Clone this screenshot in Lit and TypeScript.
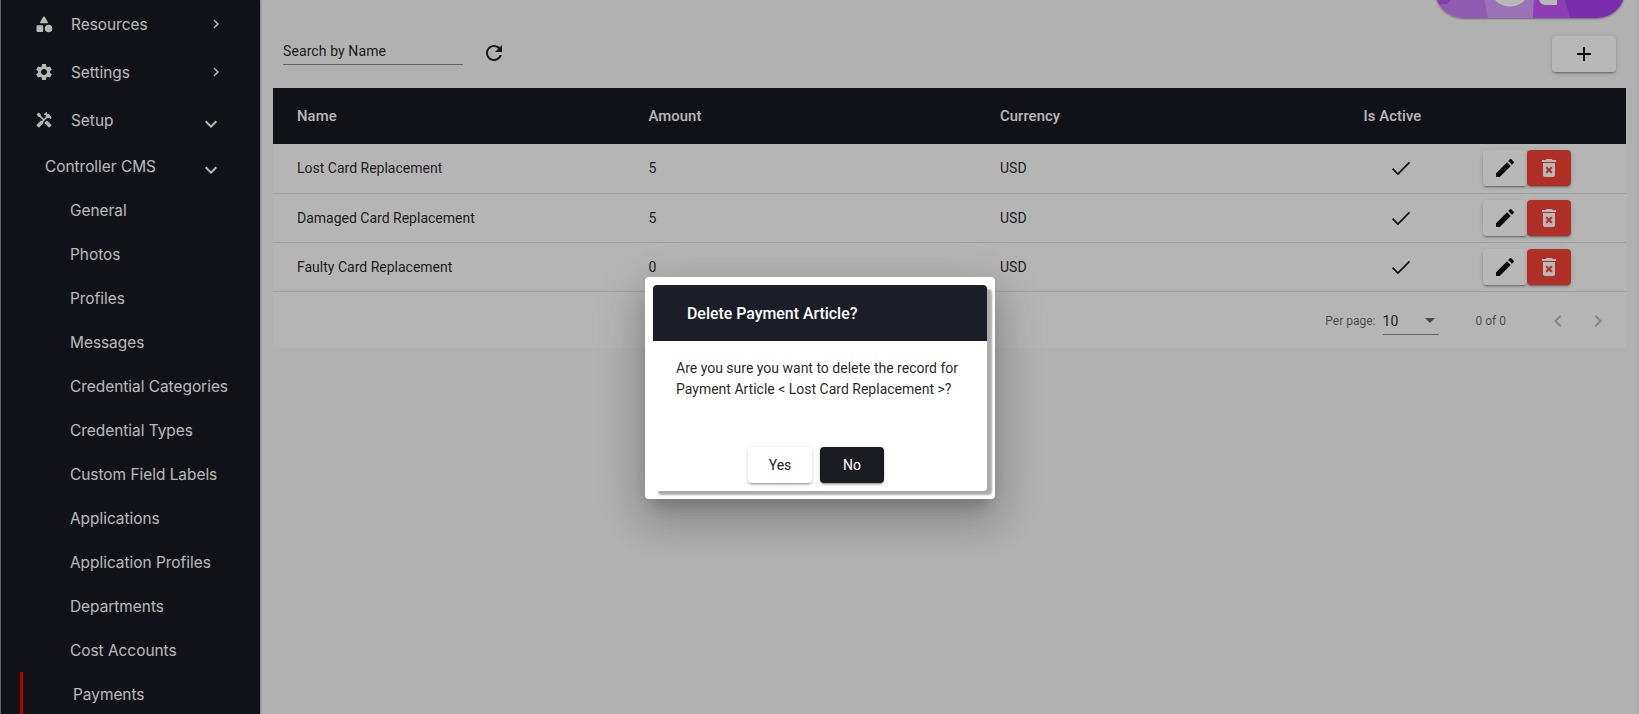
import { LitElement, html, css, svg } from "lit";
import { customElement } from "lit/decorators.js";

const FONT = css`Roboto, "Liberation Sans", sans-serif`;

const subItems = ["General","Photos","Profiles","Messages","Credential Categories","Credential Types","Custom Field Labels","Applications","Application Profiles","Departments","Cost Accounts"];
const rows = [
  ["Lost Card Replacement","5","USD"],
  ["Damaged Card Replacement","5","USD"],
  ["Faulty Card Replacement","0","USD"],
];

const icon = (d: string, size = 24) => html`<svg width=${size} height=${size} viewBox="0 0 24 24" fill="currentColor"><path d=${d}></path></svg>`;

const P = {
  shapes: "M11.15 3.4 7.43 9.48c-.41.66.07 1.52.85 1.52h7.43c.78 0 1.26-.86.85-1.52L12.85 3.4c-.39-.64-1.31-.64-1.7 0zM17.5 13a4.5 4.5 0 1 0 0 9 4.5 4.5 0 0 0 0-9zM4 21.5h6c.55 0 1-.45 1-1v-6c0-.55-.45-1-1-1H4c-.55 0-1 .45-1 1v6c0 .55.45 1 1 1z",
  gear: "M19.14 12.94c.04-.3.06-.61.06-.94 0-.32-.02-.64-.07-.94l2.03-1.58c.18-.14.23-.41.12-.61l-1.92-3.32c-.12-.22-.37-.29-.59-.22l-2.39.96c-.5-.38-1.03-.7-1.62-.94l-.36-2.54c-.04-.24-.24-.41-.48-.41h-3.84c-.24 0-.43.17-.47.41l-.36 2.54c-.59.24-1.13.57-1.62.94l-2.39-.96c-.22-.08-.47 0-.59.22L2.74 8.87c-.12.21-.08.47.12.61l2.03 1.58c-.05.3-.09.63-.09.94s.02.64.07.94l-2.03 1.58c-.18.14-.23.41-.12.61l1.92 3.32c.12.22.37.29.59.22l2.39-.96c.5.38 1.03.7 1.62.94l.36 2.54c.05.24.24.41.48.41h3.84c.24 0 .44-.17.47-.41l.36-2.54c.59-.24 1.13-.56 1.62-.94l2.39.96c.22.08.47 0 .59-.22l1.92-3.32c.12-.22.07-.47-.12-.61l-2.01-1.58zM12 15.6c-1.98 0-3.6-1.62-3.6-3.6s1.62-3.6 3.6-3.6 3.6 1.62 3.6 3.6-1.62 3.6-3.6 3.6z",
  tools: "m21.67 18.17-5.3-5.3h-.99l-2.54 2.54v.99l5.3 5.3c.39.39 1.02.39 1.41 0l2.12-2.12c.39-.38.39-1.02 0-1.41zM17.34 10.19l1.41-1.41 2.12 2.12c1.17-1.17 1.17-3.07 0-4.24l-3.54-3.54-1.41 1.41V1.71l-.7-.71-3.54 3.54.71.71h2.83l-1.41 1.41 1.06 1.06-2.89 2.89-4.13-4.13V5.06L4.83 2.04 2 4.87 5.03 7.9h1.41l4.13 4.13-.85.85H7.6l-5.3 5.3c-.39.39-.39 1.02 0 1.41l2.12 2.12c.39.39 1.02.39 1.41 0l5.3-5.3v-2.12l5.15-5.15 1.06 1.05z",
  chevR: "M10 6 8.59 7.41 13.17 12l-4.58 4.59L10 18l6-6z",
  chevD: "M16.59 8.59 12 13.17 7.41 8.59 6 10l6 6 6-6z",
  refresh: "M17.65 6.35C16.2 4.9 14.21 4 12 4c-4.42 0-7.99 3.58-7.99 8s3.57 8 7.99 8c3.73 0 6.84-2.55 7.73-6h-2.08c-.82 2.33-3.04 4-5.65 4-3.31 0-6-2.69-6-6s2.69-6 6-6c1.66 0 3.14.69 4.22 1.78L13 11h7V4l-2.35 2.35z",
  plus: "M19 13h-6v6h-2v-6H5v-2h6V5h2v6h6v2z",
  pencil: "M3 17.25V21h3.75L17.81 9.94l-3.75-3.75L3 17.25zM20.71 7.04c.39-.39.39-1.02 0-1.41l-2.34-2.34a.996.996 0 0 0-1.41 0l-1.83 1.83 3.75 3.75 1.83-1.83z",
  trash: "M6 19c0 1.1.9 2 2 2h8c1.1 0 2-.9 2-2V7H6v12zm2.46-7.12l1.41-1.41L12 12.59l2.12-2.12 1.41 1.41L13.41 14l2.12 2.12-1.41 1.41L12 15.41l-2.12 2.12-1.41-1.41L10.59 14l-2.13-2.12zM15.5 4l-1-1h-5l-1 1H5v2h14V4z",
  left: "M15.41 7.41 14 6l-6 6 6 6 1.41-1.41L10.83 12z",
  right: "M10 6 8.59 7.41 13.17 12l-4.58 4.59L10 18l6-6z",
};

const checkIcon = html`<svg width="24" height="24" viewBox="0 0 24 24" fill="none" stroke="currentColor" stroke-width="1.7"><path d="M3.6 12.7l5.3 5.3L20.5 6.4"></path></svg>`;

@customElement("app-root")
export class AppRoot extends LitElement {
  static styles = css`
    :host { display: block; height: 714px; overflow: hidden; position: relative; font-family: ${FONT}; background: #fff; }
    .page { display: flex; height: 714px; overflow: hidden; }
    .side { width: 260px; flex: none; background: #181a22; border-left: 1px solid #888; box-sizing: border-box; color: #fff; height: 714px; overflow: hidden; font-family: Inter, "Liberation Sans", sans-serif; box-shadow: 1px 0 2px rgba(0,0,0,.25); position: relative; z-index: 1; }
    .top { display: flex; align-items: center; height: 48px; font-size: 15.4px; }
    .top .ic { width: 20px; height: 20px; margin-left: 33px; display: flex; align-items: center; justify-content: center; }
    .top .lb { margin-left: 17px; flex: 1; }
    .top .ch { display: flex; margin-right: 35px; }
    .top .ch.down { margin-right: 37px; margin-top: 7px; }
    .cms { display: flex; align-items: center; height: 44px; font-size: 15.4px; padding-left: 44px; }
    .cms .lb { flex: 1; white-space: nowrap; }
    .cms .ch { display: flex; margin-right: 37px; margin-top: 7px; }
    .sub { display: flex; align-items: center; height: 44px; padding-left: 69px; font-size: 15.4px; white-space: nowrap; }
    .sub.active { position: relative; padding-left: 72px; }
    .sub.active::before { content: ""; position: absolute; left: 19px; top: 0; width: 3px; height: 100%; background: #f00; }
    .main { flex: 1; min-width: 0; background: #f5f5f5; position: relative; padding: 0 11px 0 13px; border-right: 2px solid #eee; }
    .logo { position: absolute; right: 12px; top: -22.5px; width: 190px; height: 40px; border-radius: 0 0 28px 28px; overflow: hidden; box-shadow: 0 1px 2px rgba(0,0,0,.4); }
    .logo svg { display: block; }
    .tools { display: flex; align-items: flex-start; height: 88px; box-sizing: border-box; padding-top: 36px; }
    .search { width: 180px; margin-left: 10px; height: 29px; box-sizing: border-box; border-bottom: 1px solid #8a8a8a; font-size: 14px; color: rgba(0,0,0,.87); padding-top: 7px; letter-spacing: .1px; }
    .refresh { margin-left: 19px; margin-top: 5px; display: flex; color: #222; }
    .spacer { flex: 1; }
    .add { width: 64px; height: 36px; background: #fff; border-radius: 4px; margin-right: 10px; display: flex; align-items: center; justify-content: center; color: #111; box-shadow: 0 3px 1px -2px rgba(0,0,0,.2), 0 2px 2px 0 rgba(0,0,0,.14), 0 1px 5px 0 rgba(0,0,0,.12); }
    table { width: 100%; border-collapse: collapse; table-layout: fixed; }
    .card { background: #fbfbfb; height: 260px; }
    thead tr { height: 56px; background: #181a22; color: #fff; }
    th { font-weight: 500; font-size: 14.8px; text-align: left; padding: 0 0 0 24px; letter-spacing: .1px; box-sizing: border-box; }
    td { font-size: 14px; padding: 0 0 0 24px; color: rgba(0,0,0,.87); height: 49px; border-bottom: 1px solid #ddd; box-sizing: border-box; }
    .c1, .c2, .c3 { width: 351.5px; }
    .c4 { width: 145px; }
    th.c4 { padding-left: 36px; }
    td.c4 { padding: 0 0 0 2px; }
    th.c5, td.c5 { padding: 0 0 0 10px; }
    .chk { display: flex; justify-content: center; color: #111; }
    .btns { display: flex; }
    .btn { width: 44px; height: 36px; flex: none; border-radius: 4px; display: flex; align-items: center; justify-content: center; box-shadow: 0 3px 1px -2px rgba(0,0,0,.2), 0 2px 2px 0 rgba(0,0,0,.14), 0 1px 5px 0 rgba(0,0,0,.12); }
    .btn.edit { background: #fff; color: #111; }
    .btn.del { background: #f44336; color: #fff; }
    .pager { display: flex; align-items: center; height: 57px; box-sizing: border-box; padding-top: 2px; justify-content: flex-end; font-size: 12px; color: rgba(0,0,0,.6); }
    .sel { margin-left: 7px; width: 56px; height: 27px; box-sizing: border-box; border-bottom: 1px solid #8a8a8a; display: flex; align-items: center; justify-content: space-between; color: rgba(0,0,0,.87); font-size: 14px; }
    .sel i { width: 0; height: 0; border-left: 5px solid transparent; border-right: 5px solid transparent; border-top: 5px solid #666; margin-right: 4px; }
    .count { margin-left: 37px; }
    .nav { display: flex; color: #bcbcbc; margin-left: 40px; gap: 16px; margin-right: 16px; }
    .scrim { position: absolute; inset: 0; background: rgba(0,0,0,.28); z-index: 2; }
    .dlg { position: absolute; z-index: 3; left: 645px; top: 277px; width: 350px; box-sizing: border-box; padding: 8px; background: #fff; border-radius: 4px; box-shadow: 0 11px 15px -7px rgba(0,0,0,.2), 0 24px 38px 3px rgba(0,0,0,.14), 0 9px 46px 8px rgba(0,0,0,.12); }
    .inner { background: #fff; border-radius: 4px; box-shadow: 5px 4px 2px rgba(0,0,0,.33); overflow: hidden; height: 206px; display: flex; flex-direction: column; }
    .dh { height: 56px; flex: none; background: #1b1e26; color: #fff; display: flex; align-items: center; padding-left: 34px; font-size: 15.9px; font-weight: 500; }
    .db { padding: 17px 24px 0 23px; font-size: 14px; line-height: 21px; color: rgba(0,0,0,.87); flex: 1; }
    .da { display: flex; justify-content: center; gap: 8px; padding: 0 8px 8px 0; }
    .da div { width: 64px; height: 36px; border-radius: 4px; display: flex; align-items: center; justify-content: center; font-size: 14px; box-shadow: 0 3px 1px -2px rgba(0,0,0,.2), 0 2px 2px 0 rgba(0,0,0,.14), 0 1px 5px 0 rgba(0,0,0,.12); }
    .yes { background: #fff; color: #222; }
    .no { background: #1b1c22; color: #fff; }
  `;

  render() {
    return html`
      <div class="page">
        <aside class="side">
          <div class="top"><span class="ic">${icon(P.shapes, 20)}</span><span class="lb">Resources</span><span class="ch">${icon(P.chevR, 18)}</span></div>
          <div class="top"><span class="ic">${icon(P.gear, 20)}</span><span class="lb">Settings</span><span class="ch">${icon(P.chevR, 18)}</span></div>
          <div class="top"><span class="ic">${icon(P.tools, 18)}</span><span class="lb">Setup</span><span class="ch down">${icon(P.chevD, 24)}</span></div>
          <div class="cms"><span class="lb">Controller CMS</span><span class="ch">${icon(P.chevD, 24)}</span></div>
          ${subItems.map((s) => html`<div class="sub">${s}</div>`)}
          <div class="sub active">Payments</div>
        </aside>
        <main class="main">
          <div class="logo">
            <svg width="190" height="40" viewBox="0 0 190 40">
              ${svg`<rect width="190" height="40" fill="#c77ef4"/><path d="M0 0H36L12 26L0 26Z" fill="#b057e9"/><path d="M45 0H100L98 40H53Z" fill="#d69efb"/><path d="M100 0H123L135 40H98Z" fill="#c257f7"/><path d="M123 0H190V40H135Z" fill="#a941f2"/><ellipse cx="75" cy="16" rx="17" ry="12.5" fill="#fff"/><path d="M103 18H122V27H110Q104 26 103 18Z" fill="#fff"/>`}
            </svg>
          </div>
          <div class="tools">
            <div class="search">Search by Name</div>
            <span class="refresh">${icon(P.refresh)}</span>
            <div class="spacer"></div>
            <div class="add">${icon(P.plus)}</div>
          </div>
          <div class="card">
            <table>
              <thead><tr><th class="c1">Name</th><th class="c2">Amount</th><th class="c3">Currency</th><th class="c4">Is Active</th><th class="c5"></th></tr></thead>
              <tbody>
                ${rows.map((r) => html`<tr>
                  <td>${r[0]}</td><td>${r[1]}</td><td>${r[2]}</td>
                  <td class="c4"><span class="chk">${checkIcon}</span></td>
                  <td class="c5"><div class="btns"><div class="btn edit">${icon(P.pencil)}</div><div class="btn del">${icon(P.trash)}</div></div></td>
                </tr>`)}
              </tbody>
            </table>
            <div class="pager">
              <span>Per page:</span>
              <div class="sel"><span>10</span><i></i></div>
              <span class="count">0 of 0</span>
              <div class="nav">${icon(P.left)}${icon(P.right)}</div>
            </div>
          </div>
        </main>
      </div>
      <div class="scrim"></div>
      <div class="dlg">
        <div class="inner">
          <div class="dh">Delete Payment Article?</div>
          <div class="db">Are you sure you want to delete the record for<br />Payment Article &lt; Lost Card Replacement &gt;?</div>
          <div class="da"><div class="yes">Yes</div><div class="no">No</div></div>
        </div>
      </div>
    `;
  }
}
